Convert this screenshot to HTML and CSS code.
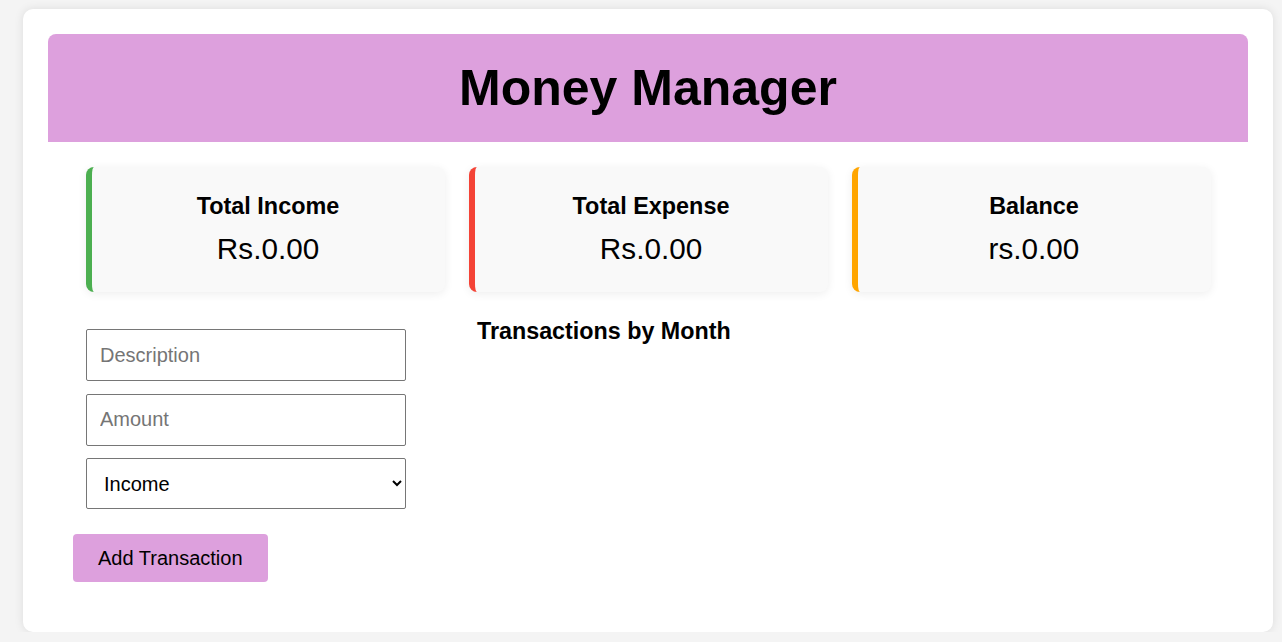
FILE: index.html
```html
<!DOCTYPE html>
<html lang="en">
<head>
<meta charset="utf-8">
<title>Money Manager</title>
<link rel="stylesheet" href="styles.css">
</head>
<body>
<div class="container">
  <header class="header">
    <h1 class="title">Money Manager</h1>
  </header>
  <section class="summary">
    <div class="card card-income">
      <h3 class="card-title">Total Income</h3>
      <p class="card-value">Rs.0.00</p>
    </div>
    <div class="card card-expense">
      <h3 class="card-title">Total Expense</h3>
      <p class="card-value">Rs.0.00</p>
    </div>
    <div class="card card-balance">
      <h3 class="card-title">Balance</h3>
      <p class="card-value">rs.0.00</p>
    </div>
  </section>
  <section class="main">
    <form class="form">
      <input class="field" type="text" placeholder="Description">
      <input class="field" type="text" placeholder="Amount">
      <select class="field select">
        <option>Income</option>
        <option>Expense</option>
      </select>
      <button class="add-btn" type="button">Add Transaction</button>
    </form>
    <div class="chart">
      <h3 class="chart-title">Transactions by Month</h3>
    </div>
  </section>
</div>
</body>
</html>
```

FILE: styles.css
```css
* { box-sizing: border-box; }

body {
  margin: 0;
  padding: 9px 0 0 23px;
  background: #f4f4f4;
  font-family: "Liberation Sans", Arial, sans-serif;
  color: #000;
}

.container {
  width: 1250px;
  height: 623px;
  background: #fff;
  border-radius: 10px;
  box-shadow: 0 0 10px rgba(0, 0, 0, 0.1);
  padding: 25px;
}

.header {
  height: 108px;
  background: #dda0dd;
  border-radius: 8px 8px 0 0;
  display: flex;
  align-items: center;
  justify-content: center;
}

.title {
  margin: 0;
  font-size: 50px;
  font-weight: bold;
  line-height: 57px;
}

.summary {
  width: 1125px;
  margin: 25px auto 0;
  display: flex;
  gap: 24px;
}

.card {
  flex: 1;
  height: 125px;
  background: #f9f9f9;
  border-radius: 8px;
  border-left: 6px solid #4caf50;
  box-shadow: 0 2px 10px rgba(0, 0, 0, 0.07);
  display: flex;
  flex-direction: column;
  align-items: center;
  justify-content: center;
  gap: 12.5px;
}

.card-income { border-left-color: #4caf50; }
.card-expense { border-left-color: #f44336; }
.card-balance { border-left-color: #ffa500; }

.card-title {
  margin: 0;
  font-size: 23.4px;
  line-height: 26px;
  font-weight: bold;
}

.card-value {
  margin: 0;
  font-size: 29.7px;
  line-height: 34px;
}

.main {
  display: flex;
  align-items: flex-start;
  margin-top: 26px;
  padding: 0 0 26px 25px;
}

.form {
  width: 333px;
  padding-top: 11px;
  display: flex;
  flex-direction: column;
  align-items: flex-start;
  gap: 12.5px;
  margin: 0;
}

.field {
  margin-left: 13px;
  width: 320px;
  height: 52px;
  border: 1px solid #767676;
  border-radius: 2px;
  padding: 0 13px;
  font-family: "Liberation Sans", Arial, sans-serif;
  font-size: 20px;
  color: #000;
  background: #fff;
}

.field::placeholder { color: #757575; }

.select {
  height: 51px;
  padding: 0 13px;
}

.add-btn {
  margin-top: 12.5px;
  background: #dda0dd;
  border: none;
  border-radius: 4px;
  padding: 12px 25px;
  height: 48px;
  font-family: "Liberation Sans", Arial, sans-serif;
  font-size: 20px;
  color: #000;
}

.chart {
  margin-left: 71px;
}

.chart-title {
  margin: 0;
  font-size: 23.3px;
  line-height: 26px;
  font-weight: bold;
}
```
